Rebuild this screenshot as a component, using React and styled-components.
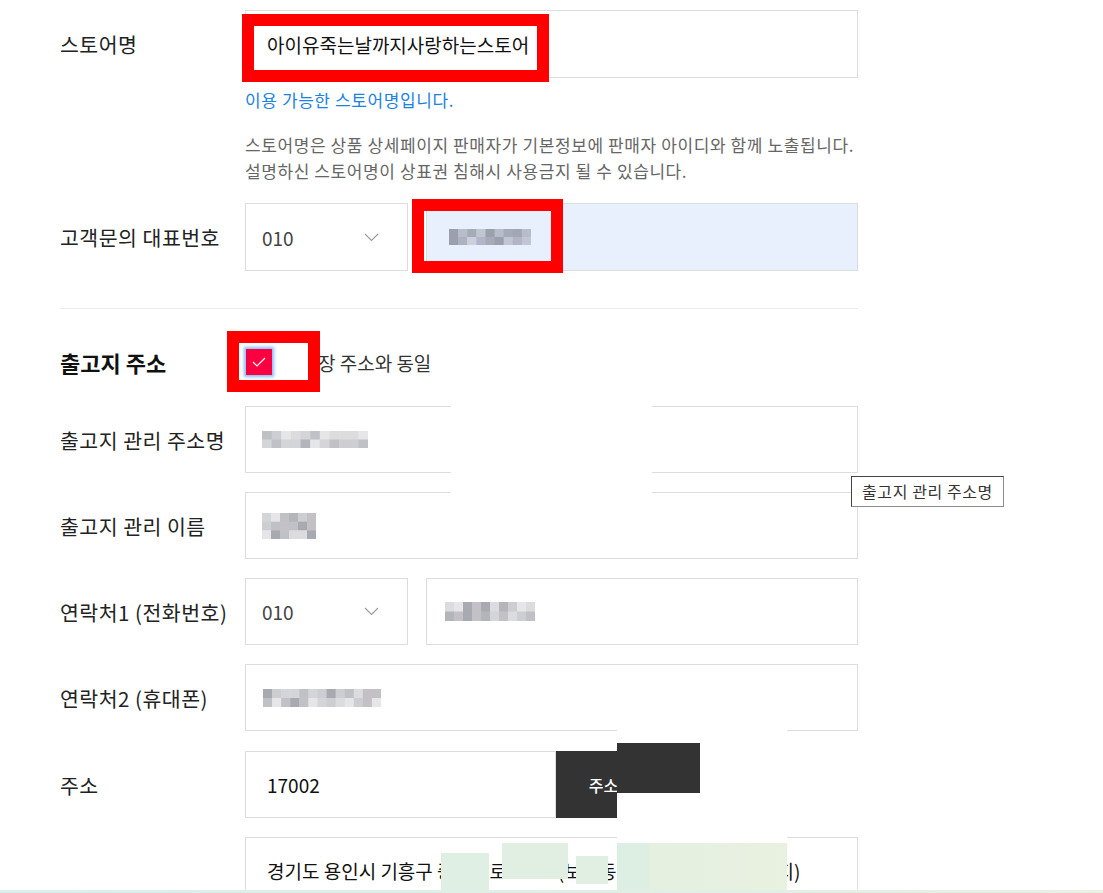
import React from 'react'
import styled, { createGlobalStyle } from 'styled-components'

const GlobalStyle = createGlobalStyle`
  html, body {
    margin: 0;
    padding: 0;
    overflow: hidden;
    background: #fff;
  }
  body {
    font-family: "Noto Sans CJK KR", "Noto Sans", sans-serif;
    color: #222;
  }
`

const Page = styled.div`
  position: relative;
  width: 1103px;
  height: 893px;
  overflow: hidden;
`
const Form = styled.div`
  padding: 10px 0 0 60px;
  width: 798px;
`
const Row = styled.div`
  display: grid;
  grid-template-columns: 185px 1fr;
  align-items: center;
  margin-top: ${p => p.$top || 0}px;
`
const Label = styled.div`
  font-size: 20.5px;
  color: #222;
  letter-spacing: 0.5px;
  white-space: nowrap;
`
const Fields = styled.div`
  display: flex;
  gap: ${p => p.$gap || 0}px;
`
const Box = styled.div`
  box-sizing: border-box;
  height: ${p => p.$h || 67}px;
  flex: ${p => (p.$w ? `0 0 ${p.$w}px` : '1')};
  border: 1px solid #ddd;
  background: ${p => (p.$filled ? '#e8f0fe' : '#fff')};
  display: flex;
  align-items: center;
  padding-left: 21px;
  font-size: 19px;
  color: #111;
  white-space: nowrap;
  overflow: hidden;
`
const Select = styled(Box)`
  justify-content: space-between;
  padding: 0 28px 0 16px;
  color: #444;
`
const Message = styled.div`
  margin: 11px 0 0 185px;
  font-size: 17px;
  line-height: 22px;
  letter-spacing: 0.6px;
  color: #1a82e2;
`
const Help = styled.div`
  margin: 21px 0 0 185px;
  font-size: 17px;
  line-height: 26px;
  color: #666;
  letter-spacing: 0.6px;
`
const Divider = styled.hr`
  margin: 37px 0 0;
  border: 0;
  border-top: 1px solid #ececec;
`
const Section = styled.div`
  display: grid;
  grid-template-columns: 185px 1fr;
  align-items: center;
  margin-top: 37px;
  height: 28px;
`
const SectionTitle = styled.h3`
  margin: 0;
  font-size: 22px;
  font-weight: 700;
  color: #111;
`
const CheckLabel = styled.label`
  display: flex;
  align-items: center;
  gap: 11px;
  font-size: 19px;
  color: #333;
`
const Check = styled.span`
  position: relative;
  z-index: 3;
  width: 26px;
  height: 26px;
  margin-left: 1px;
  background: #fa0041;
  box-shadow: 0 0 3px 2px rgba(110, 175, 255, 0.85);
  display: flex;
  align-items: center;
  justify-content: center;
`
const SearchButton = styled.button`
  flex: 0 0 128px;
  height: 67px;
  border: 0;
  background: #333;
  color: #fff;
  font-family: inherit;
  font-size: 16px;
  font-weight: 500;
`
const AddressLine = styled.div`
  display: flex;
  margin-left: 185px;
  margin-top: 19px;
`

/* annotations laid over the screenshot */
const Frame = styled.div`
  position: absolute;
  left: ${p => p.$x}px;
  top: ${p => p.$y}px;
  width: ${p => p.$w}px;
  height: ${p => p.$h}px;
  box-sizing: border-box;
  border: 12px solid #ff0000;
  background: ${p => (p.$fill ? '#fff' : 'transparent')};
  z-index: 2;
`
const Patch = styled.div`
  position: absolute;
  left: ${p => p.$x}px;
  top: ${p => p.$y}px;
  width: ${p => p.$w}px;
  height: ${p => p.$h}px;
  background: ${p => p.$bg};
  z-index: 4;
`
const Tooltip = styled.div`
  position: absolute;
  left: 851px;
  top: 476px;
  height: 31px;
  box-sizing: border-box;
  padding: 0 10px;
  border: 1px solid #444;
  border-right-color: #8a8a8a;
  border-bottom-color: #8a8a8a;
  background: #fff;
  font-size: 16px;
  letter-spacing: 0.6px;
  line-height: 29px;
  color: #333;
  z-index: 5;
`
const Footer = styled.div`
  position: fixed;
  left: 0;
  right: 0;
  bottom: 0;
  height: 3px;
  background: linear-gradient(90deg, #d9efec, #e2efe4 70%, #e8f1e2);
  z-index: 6;
`

const grays = ['#b3b5bb', '#cdced2', '#bfc1c6', '#dcdcdf', '#a8aab1', '#d4d5d8', '#c4c1c6', '#e6e6e8']
const blues = ['#a6abb8', '#c2c5d2', '#acb2bf', '#9ba0ad', '#b8bccb', '#b3b4c9', '#cbd0dd', '#a3a7b3']

const Mosaic = ({ w, h, rows, cols, colors, seed = 1, $ml = -5 }) => {
  const cw = w / cols
  const ch = h / rows
  let s = seed
  const rnd = () => {
    s = (s * 9301 + 49297) % 233280
    return s / 233280
  }
  const cells = []
  for (let r = 0; r < rows; r++) {
    for (let c = 0; c < cols; c++) {
      cells.push(
        <rect key={r + '-' + c} x={c * cw} y={r * ch} width={cw + 0.5} height={ch + 0.5}
          fill={colors[Math.floor(rnd() * colors.length)]} />
      )
    }
  }
  return (
    <svg width={w} height={h} style={{ marginLeft: $ml, display: 'block' }}>
      {cells}
    </svg>
  )
}

const Chevron = () => (
  <svg width="15" height="9" viewBox="0 0 15 9">
    <path d="M1 1 L7.5 7.5 L14 1" fill="none" stroke="#9a9a9a" strokeWidth="1.1" />
  </svg>
)

export default function App() {
  return (
    <Page>
      <GlobalStyle />
      <Form>
        <Row>
          <Label>스토어명</Label>
          <Box $h={68}>아이유죽는날까지사랑하는스토어</Box>
        </Row>
        <Message>이용 가능한 스토어명입니다.</Message>
        <Help>
          스토어명은 상품 상세페이지 판매자가 기본정보에 판매자 아이디와 함께 노출됩니다.
          <br />
          설명하신 스토어명이 상표권 침해시 사용금지 될 수 있습니다.
        </Help>
        <Row $top={19}>
          <Label>고객문의 대표번호</Label>
          <Fields $gap={18}>
            <Select $w={163} $h={68}>010<Chevron /></Select>
            <Box $filled $h={68}>
              <Mosaic w={82} h={16} rows={2} cols={9} colors={blues} seed={7} $ml={1} />
            </Box>
          </Fields>
        </Row>
        <Divider />
        <Section>
          <SectionTitle>출고지 주소</SectionTitle>
          <CheckLabel>
            <Check>
              <svg width="14" height="10" viewBox="0 0 14 10">
                <path d="M1 5 L5 9 L13 1" fill="none" stroke="#fff" strokeWidth="1.2" />
              </svg>
            </Check>
            사업장 주소와 동일
          </CheckLabel>
        </Section>
        <Row $top={32}>
          <Label>출고지 관리 주소명</Label>
          <Box>
            <Mosaic w={106} h={17} rows={2} cols={11} colors={grays} seed={3} />
          </Box>
        </Row>
        <Row $top={19}>
          <Label>출고지 관리 이름</Label>
          <Box>
            <Mosaic w={54} h={26} rows={3} cols={6} colors={grays} seed={11} />
          </Box>
        </Row>
        <Row $top={19}>
          <Label>연락처1 (전화번호)</Label>
          <Fields $gap={18}>
            <Select $w={163}>010<Chevron /></Select>
            <Box>
              <Mosaic w={90} h={19} rows={2} cols={10} colors={grays} seed={5} $ml={-3} />
            </Box>
          </Fields>
        </Row>
        <Row $top={19}>
          <Label>연락처2 (휴대폰)</Label>
          <Box>
            <Mosaic w={118} h={18} rows={2} cols={13} colors={grays} seed={9} $ml={-4} />
          </Box>
        </Row>
        <Row $top={20}>
          <Label>주소</Label>
          <Fields>
            <Box $w={311}>17002</Box>
            <SearchButton>주소 검색</SearchButton>
          </Fields>
        </Row>
        <AddressLine>
          <Box>경기도 용인시 기흥구 중부대로 1234 (보정동, 동백센트럴자이2단지)</Box>
        </AddressLine>
      </Form>

      <Frame $x={242} $y={14} $w={307} $h={68} />
      <Frame $x={412} $y={199} $w={151} $h={74} />
      <Frame $x={227} $y={331} $w={93} $h={61} $fill />

      <Patch $x={451} $y={398} $w={201} $h={98} $bg="#fff" />
      <Patch $x={617} $y={725} $w={170} $h={118} $bg="#fff" />
      <Patch $x={617} $y={743} $w={83} $h={50} $bg="#333" />
      <Patch $x={441} $y={853} $w={48} $h={40} $bg="#e0efe3" />
      <Patch $x={502} $y={843} $w={66} $h={36} $bg="#e1efe2" />
      <Patch $x={576} $y={856} $w={32} $h={28} $bg="#e1efe2" />
      <Patch $x={617} $y={843} $w={170} $h={50} $bg="linear-gradient(90deg, #ddeee2 0, #ddeee2 18%, #e5f0e1 20%, #e9f1e0)" />

      <Tooltip>출고지 관리 주소명</Tooltip>
      <Footer />
    </Page>
  )
}
